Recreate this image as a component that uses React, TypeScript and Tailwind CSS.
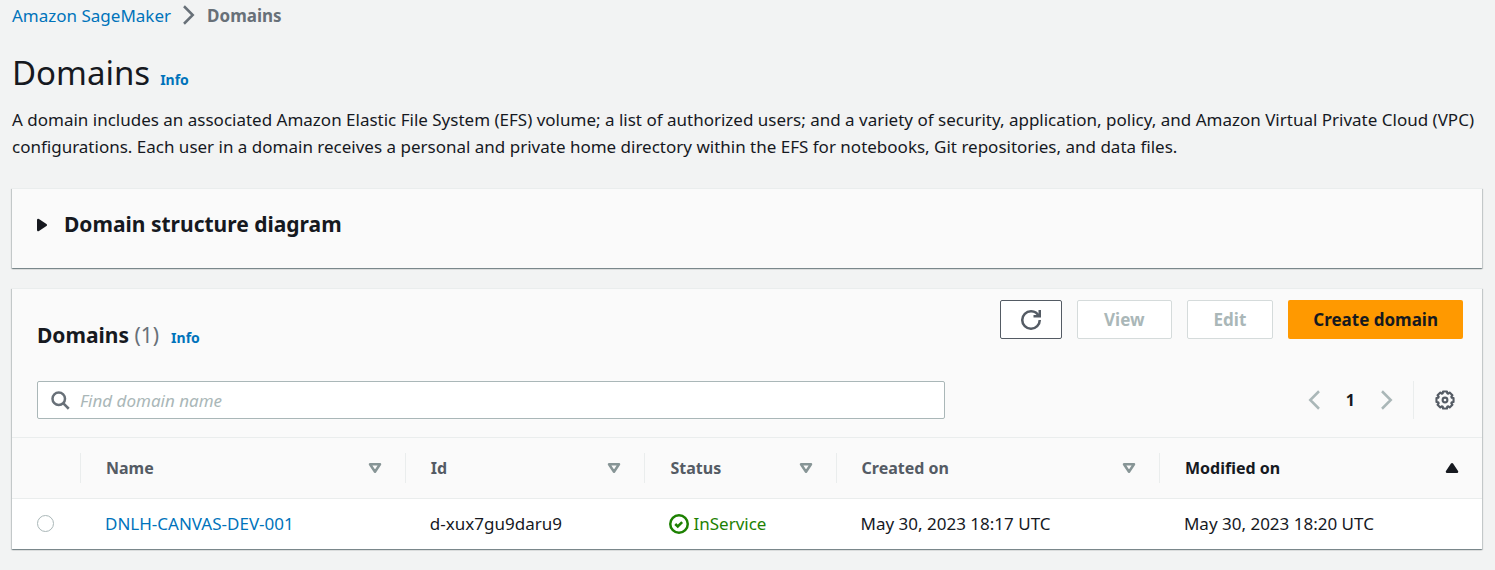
import React from "react";

type IconProps = { className?: string; children: React.ReactNode };

function Icon({ className = "", children }: IconProps) {
  return (
    <svg
      viewBox="0 0 16 16"
      className={`size-5 shrink-0 fill-none stroke-current stroke-2 ${className}`}
      aria-hidden="true"
    >
      {children}
    </svg>
  );
}

const card =
  "border-t border-[#eaeded] bg-[#fafafa] shadow-[0_1px_1px_0_rgba(0,28,36,0.3),1px_1px_1px_0_rgba(0,28,36,0.15),-1px_1px_1px_0_rgba(0,28,36,0.15)]";

const columns = [
  { label: "Name", width: "w-[22.1%]", sorted: false },
  { label: "Id", width: "w-[16.3%]", sorted: false },
  { label: "Status", width: "w-[13%]", sorted: false },
  { label: "Created on", width: "w-[22%]", sorted: false },
  { label: "Modified on", width: "", sorted: true },
];

const domains = [
  {
    name: "DNLH-CANVAS-DEV-001",
    id: "d-xux7gu9daru9",
    status: "InService",
    created: "May 30, 2023 18:17 UTC",
    modified: "May 30, 2023 18:20 UTC",
  },
];

export default function App() {
  return (
    <div className="min-h-screen bg-[#f2f3f3] pr-[13px] pb-5 pl-3 font-['Noto_Sans',sans-serif] text-[17px] leading-[27px] text-[#16191f]">
      <nav aria-label="Breadcrumb" className="flex h-[30px] items-center gap-2">
        <a href="#sagemaker" className="text-[#0073bb]">Amazon SageMaker</a>
        <Icon className="text-[#687078]">
          <path d="M4 1l7 7-7 7" />
        </Icon>
        <span className="font-bold text-[#687078]">Domains</span>
      </nav>

      <header className="pt-5">
        <div className="flex items-baseline gap-2.5">
          <h1 className="text-[33px] leading-[46px]">Domains</h1>
          <a href="#info" className="text-[14px] font-bold text-[#0073bb]">Info</a>
        </div>
        <p className="pt-2.5">
          A domain includes an associated Amazon Elastic File System (EFS) volume; a list of authorized users; and a
          variety of security, application, policy, and Amazon Virtual Private Cloud (VPC) configurations. Each user in
          a domain receives a personal and private home directory within the EFS for notebooks, Git repositories, and
          data files.
        </p>
      </header>

      <section className={`mt-7 ${card}`}>
        <button type="button" className="flex h-[79px] w-full items-center gap-3 px-5 pb-2 text-left">
          <Icon className="[stroke-linejoin:round]">
            <path d="M5 4l6 4-6 4z" fill="currentColor" />
          </Icon>
          <span className="text-[21px] font-bold">Domain structure diagram</span>
        </button>
      </section>

      <section className={`mt-5 ${card}`}>
        <div className="flex items-start justify-between pt-[11px] pr-[19px] pl-[25px]">
          <div className="flex items-baseline gap-3 pt-[21px]">
            <h2 className="text-[21px] leading-7 font-bold">
              Domains <span className="font-normal text-[#687078]">(1)</span>
            </h2>
            <a href="#domains-info" className="text-[14px] font-bold text-[#0073bb]">Info</a>
          </div>
          <div className="flex gap-[15px] font-bold">
            <button
              type="button"
              aria-label="Refresh"
              className="flex h-[39px] items-center rounded-xs border border-[#545b64] bg-white px-5 text-[#545b64]"
            >
              <Icon>
                <path d="M10 5h5V0" />
                <path d="M15 8a6.957 6.957 0 01-7 7 6.957 6.957 0 01-7-7 6.957 6.957 0 017-7 6.87 6.87 0 016.3 4" />
              </Icon>
            </button>
            <button type="button" disabled className="h-[39px] rounded-xs border border-[#d5dbdb] bg-white px-[26px] text-[#aab7b8]">
              View
            </button>
            <button type="button" disabled className="h-[39px] rounded-xs border border-[#d5dbdb] bg-white px-[26px] text-[#aab7b8]">
              Edit
            </button>
            <button type="button" className="h-[39px] rounded-xs bg-[#ff9900] px-[25px]">
              Create domain
            </button>
          </div>
        </div>

        <div className="flex items-center justify-between pt-[30px] pr-[27px] pb-[18px] pl-[25px]">
          <label className="flex h-[38px] w-[64%] items-center gap-2.5 rounded-xs border border-[#aab7b8] bg-white px-3">
            <Icon className="text-[#687078]">
              <circle cx="7" cy="7" r="5" />
              <path d="M15 15l-4.5-4.5" />
            </Icon>
            <input
              type="text"
              aria-label="Find domain name"
              placeholder="Find domain name"
              className="min-w-0 flex-1 bg-transparent outline-none placeholder:text-[#aab7b8] placeholder:italic"
            />
          </label>
          <div className="flex items-center text-[#aab7b8]">
            <button type="button" disabled aria-label="Previous page">
              <Icon><path d="M12 1L5 8l7 7" /></Icon>
            </button>
            <button type="button" className="px-[22px] text-[16px] font-bold text-[#16191f]">1</button>
            <button type="button" disabled aria-label="Next page">
              <Icon><path d="M4 1l7 7-7 7" /></Icon>
            </button>
            <span className="mr-[21px] ml-4 h-[38px] border-l border-[#eaeded]" />
            <button type="button" aria-label="Preferences" className="text-[#545b64]">
              <Icon className="[stroke-linejoin:round]">
                <g transform="translate(8 8)" strokeWidth="1.7">
                  <path d="M6.82 1.57 5.42 1.76 5.08 2.59 5.94 3.71 3.71 5.94 2.59 5.08 1.76 5.42 1.57 6.82-1.57 6.82-1.76 5.42-2.59 5.08-3.71 5.94-5.94 3.71-5.08 2.59-5.42 1.76-6.82 1.57-6.82-1.57-5.42-1.76-5.08-2.59-5.94-3.71-3.71-5.94-2.59-5.08-1.76-5.42-1.57-6.82 1.57-6.82 1.76-5.42 2.59-5.08 3.71-5.94 5.94-3.71 5.08-2.59 5.42-1.76 6.82-1.57z" />
                  <circle r="1.9" />
                </g>
              </Icon>
            </button>
          </div>
        </div>

        <table className="w-full table-fixed border-collapse text-left">
          <thead>
            <tr className="h-[61px] border-y border-[#eaeded]">
              <th aria-label="Selection" className="w-[68px] p-0" />
              {columns.map((c) => (
                <th key={c.label} className={`p-0 text-[16px] ${c.width}`}>
                  <div
                    className={`flex h-[30px] items-center justify-between border-l border-[#eaeded] pr-5 pl-[25px] ${c.sorted ? "text-[#16191f]" : "text-[#545b64]"}`}
                  >
                    {c.label}
                    {c.sorted ? (
                      <Icon className="[stroke-linejoin:round]">
                        <path d="M4 11h8L8 5z" fill="currentColor" />
                      </Icon>
                    ) : (
                      <Icon className="text-[#879596] [stroke-linejoin:round]">
                        <path d="M4 5h8l-4 6z" />
                      </Icon>
                    )}
                  </div>
                </th>
              ))}
            </tr>
          </thead>
          <tbody>
            {domains.map((d) => (
              <tr key={d.id} className="h-[50px] bg-white">
                <td className="p-0 pl-[25px]">
                  <input
                    type="radio"
                    name="domain"
                    aria-label={`Select ${d.name}`}
                    className="block size-[17px] appearance-none rounded-full border border-[#aab7b8] bg-white checked:border-[5px] checked:border-[#0073bb]"
                  />
                </td>
                <td className="p-0 pl-[25px]"><a href="#domain" className="text-[#0073bb]">{d.name}</a></td>
                <td className="p-0 pl-[25px]">{d.id}</td>
                <td className="p-0 pl-[25px]">
                  <span className="flex items-center gap-1 text-[#1d8102]">
                    <Icon>
                      <circle cx="8" cy="8" r="7" />
                      <path d="M5 8l2 2 3.521-3.521" />
                    </Icon>
                    {d.status}
                  </span>
                </td>
                <td className="p-0 pl-[25px]">{d.created}</td>
                <td className="p-0 pl-[25px]">{d.modified}</td>
              </tr>
            ))}
          </tbody>
        </table>
      </section>
    </div>
  );
}
